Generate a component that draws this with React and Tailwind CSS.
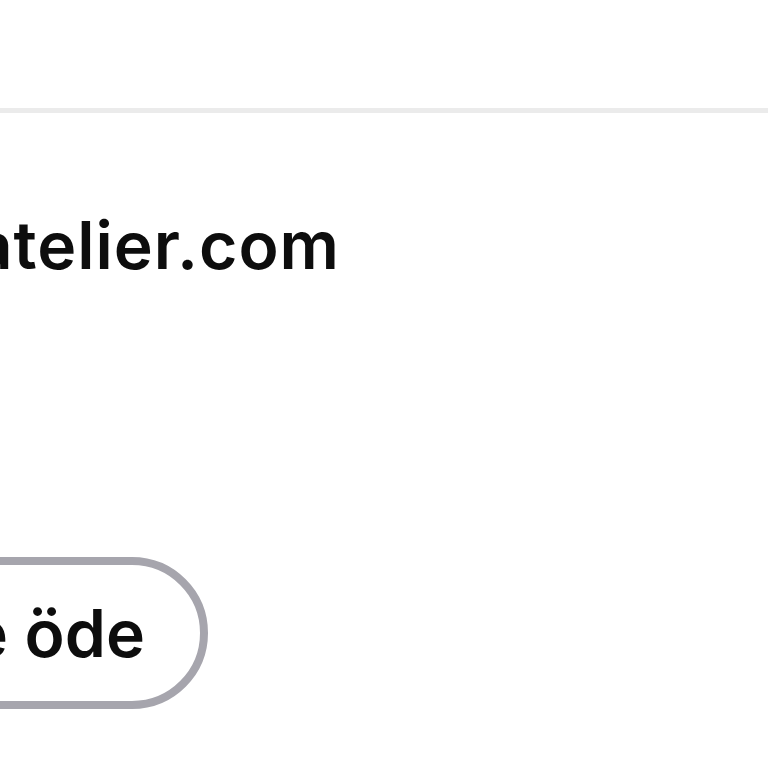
export default function App() {
  return (
    <main
      className="h-[768px] w-[768px] overflow-hidden bg-white text-[#0d0d0d]"
      style={{ fontFamily: 'Inter, "Noto Sans", sans-serif' }}
    >
      <div className="h-[108px]" />
      <div className="h-[5px] bg-[#ebebeb]" />

      <div className="flex w-[340px] justify-end pt-[99px]">
        <div className="whitespace-nowrap text-[66px] font-semibold leading-[66px] tracking-[1px]">
          info@atelier.com
        </div>
      </div>

      <div className="mt-[279px] flex w-[208px] justify-end">
        <button className="flex h-[152px] shrink-0 items-center whitespace-nowrap rounded-full border-[8px] border-[#a6a5ad] bg-white pl-[60px] pr-[55px] text-[66px] font-semibold leading-none">
          Güvenle öde
        </button>
      </div>
    </main>
  );
}
